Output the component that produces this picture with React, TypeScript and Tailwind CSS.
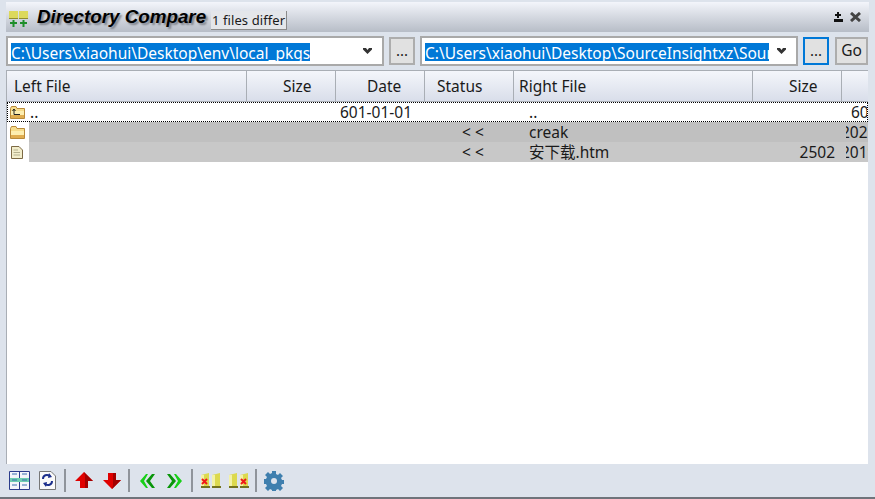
const font = { fontFamily: '"Noto Sans", "Noto Sans CJK SC", sans-serif' }

const cols = 'grid grid-cols-[240px_89px_89px_89px_239px_89px_minmax(0,1fr)]'

const HeaderCell = ({ label, pad }: { label: string; pad: string }) => (
  <div className={`flex h-full items-center border-r border-[#a9aeb5] pt-[1px] last:border-r-0 ${pad}`}>{label}</div>
)

const Combo = ({ text }: { text: string }) => (
  <div className="flex h-[30px] w-[378px] shrink-0 items-center border-2 border-[#a9a9a9] bg-white pl-[3px]">
    <div className="h-[20px] min-w-0 flex-1 overflow-hidden">
      <span className="inline-block whitespace-nowrap bg-[#0078d7] text-[15.5px] leading-[20px] text-white">{text}</span>
    </div>
    <div className="flex w-[27px] shrink-0 justify-center pr-[2px]">
      <svg width="9" height="6" viewBox="0 0 9 6">
        <path d="M0 0h3l1.500 2 1.500-2h3v1.500L4.500 6 0 1.500z" fill="#333" />
      </svg>
    </div>
  </div>
)

const DotsButton = ({ active }: { active?: boolean }) => (
  <div
    className={`flex h-[28px] w-[26px] shrink-0 items-end justify-center border-2 bg-[#e1e1e1] pb-[5px] text-[15px] leading-none ${active ? 'border-[#0078d7]' : 'border-[#adadad]'}`}
  >
    ...
  </div>
)

const FolderIcon = ({ up }: { up?: boolean }) => (
  <svg width="15" height="13" viewBox="0 0 15 13" className="shrink-0">
    <path d="M0.500 2.500 L1.500 0.500 H6 L7 2.500 H14.500 V12.500 H0.500 Z" fill="#f6dc8a" stroke="#b98a3a" />
    <path d="M1 5 H14 V9 H1 Z" fill="#fdeeb0" />
    <path d="M1 9 H14 V12 H1 Z" fill="#e0ad50" />
    {up && <path d="M4 3 V8.500 H10 M2.500 5 L4 3 L5.500 5" fill="none" stroke="#222" strokeWidth="1" />}
  </svg>
)

const FileIcon = () => (
  <svg width="12" height="13" viewBox="0 0 12 13" className="shrink-0">
    <path d="M0.500 0.500 H8 L11.500 4 V12.500 H0.500 Z" fill="#f2edcb" stroke="#7d6a45" />
    <path d="M2.500 4 H7 M2.500 6.500 H9 M2.500 9 H9" stroke="#b5b08e" />
  </svg>
)

const Arrow = ({ down }: { down?: boolean }) => (
  <svg width="18" height="17" viewBox="0 0 18 17" className={down ? '-scale-y-100' : ''}>
    <path d="M9 0 L18 9 H13 V16 H5 V9 H0 Z" fill="#e00000" />
    <path d="M9 0 L18 9 H13 V16 H10 V4 Z" fill="#a30000" />
  </svg>
)

const Chevrons = ({ right }: { right?: boolean }) => (
  <svg width="17" height="14" viewBox="0 0 17 14" className={right ? '-scale-x-100' : ''}>
    <path d="M7 0 L1 7 L7 14 H9 L5 7 L9 0 Z" fill="#18d018" />
    <path d="M13 0 L7 7 L13 14 H16 L11 7 L16 0 Z" fill="#0a960a" />
  </svg>
)

const FolderPair = ({ side }: { side: 'left' | 'right' }) => {
  const offset = side === 'left' ? 1 : 12
  return (
    <svg width="20" height="16" viewBox="0 0 20 16">
      <path d="M0 2 L8 0 V13 L0 13 Z M11 2 L19 0 V13 H11 Z" fill="#dcd94e" />
      <path d="M0 13 H9 V15 H0 Z M11 13 H20 V15 H11 Z" fill="#73721e" />
      <path d="M0 2 H3 V13 H0 Z M11 2 H14 V13 H11 Z" fill="#f3f2a6" />
      <path d={`M${offset} 6 L${offset + 5} 11 M${offset + 5} 6 L${offset} 11`} stroke="#f01818" strokeWidth="2" />
    </svg>
  )
}

const Gear = () => (
  <svg width="20" height="20" viewBox="0 0 20 20">
    <path
      d="M8 0h4v3l2 1 2-2 3 3-2 2 1 2h2v4h-2l-1 2 2 2-3 3-2-2-2 1v3H8v-3l-2-1-2 2-3-3 2-2-1-2H0V8h2l1-2-2-2 3-3 2 2 2-1z"
      fill="#3f7fae"
    />
    <circle cx="10" cy="10" r="3" fill="#dde3ec" />
  </svg>
)

const Sep = () => <div className="h-[23px] w-[2px] shrink-0 bg-[#8f949b]" />

const ClippedDate = ({ text, bg }: { text: string; bg: string }) => (
  <div className={`h-full pl-[4px] ${bg}`}>
    <div className="overflow-hidden whitespace-nowrap">
      <span className="-ml-[5px] inline-block">{text}</span>
    </div>
  </div>
)

const App = () => {
  return (
    <div className="h-[499px] w-[875px] overflow-hidden bg-[#dde3ec] pt-[2px] text-[#1a1a1a]" style={font}>
      <div className="mx-[6px] flex h-[30px] items-center bg-gradient-to-b from-[#f3f5fb] to-[#b7bdc7] pl-[3px] pr-[8px]">
        <svg width="20" height="17" viewBox="0 0 20 17" className="mt-[3px] shrink-0">
          <path d="M0 1 H9 V9 H0 Z M10 1 H19 V9 H10 Z" fill="#dcd95c" />
          <path d="M0 8 H9 V9 H0 Z M10 8 H19 V9 H10 Z" fill="#8f8d2e" />
          <path d="M4.500 10 V17 M1 13 H8 M14.500 10 V17 M11 13 H18" stroke="#1f8f2b" strokeWidth="2" />
        </svg>
        <div
          className="ml-[8px] whitespace-nowrap text-[18.800px] font-bold italic leading-none text-black [text-shadow:2px_2px_2px_#7d828b]"
          style={{ fontFamily: '"Liberation Sans", sans-serif' }}
        >
          Directory Compare
        </div>
        <div className="ml-[5px] mt-[7px] flex h-[19px] w-[76px] shrink-0 items-center justify-center border-b border-r border-[#8a8a8a] bg-[#e4e6ea] text-[13px] leading-none tracking-[0.1px]">
          1 files differ
        </div>
        <div className="ml-auto flex items-center gap-[6px]">
          <svg width="11" height="10" viewBox="0 0 11 10">
            <path d="M4 0h2v2h2v2H6v2H4V4H2V2h2z M1 7h9v3H1z" fill="#111" />
          </svg>
          <svg width="11" height="10" viewBox="0 0 11 10">
            <path d="M1 1 L10 9 M10 1 L1 9" stroke="#444" strokeWidth="3" />
          </svg>
        </div>
      </div>
      <div className="flex h-[38px] items-center bg-[#dde3ec] pl-[6px]">
        <Combo text="C:\Users\xiaohui\Desktop\env\local_pkgs" />
        <div className="ml-[5px]">
          <DotsButton />
        </div>
        <div className="ml-[5px]">
          <Combo text="C:\Users\xiaohui\Desktop\SourceInsightxz\SourceInsight" />
        </div>
        <div className="ml-[5px]">
          <DotsButton active />
        </div>
        <div className="ml-[6px] flex h-[28px] w-[33px] shrink-0 items-center justify-center border-2 border-[#adadad] bg-[#e1e1e1] text-[15.5px]">
          Go
        </div>
      </div>
      <div className="ml-[6px] mr-[7px] flex h-[394px] flex-col border-l border-[#a9aeb5] bg-white text-[15.5px]">
        <div className={`${cols} h-[32px] shrink-0 border-y border-[#a9aeb5] bg-gradient-to-b from-[#f4f6fb] to-[#d9deea]`}>
          <HeaderCell label="Left File" pad="pl-[7px]" />
          <HeaderCell label="Size" pad="pl-[36px]" />
          <HeaderCell label="Date" pad="pl-[31px]" />
          <HeaderCell label="Status" pad="pl-[12px]" />
          <HeaderCell label="Right File" pad="pl-[5px]" />
          <HeaderCell label="Size" pad="pl-[36px]" />
          <HeaderCell label="" pad="" />
        </div>
        <div className={`${cols} h-[20px] items-center border border-dotted border-black leading-[18px]`}>
          <div className="flex items-center pl-[2px]">
            <FolderIcon up />
            <span className="ml-[5px]">..</span>
          </div>
          <div />
          <div className="col-span-2 pl-[3px]">601-01-01</div>
          <div className="pl-[14px]">..</div>
          <div />
          <div className="overflow-hidden whitespace-nowrap pl-[8px]">601-01-01</div>
        </div>
        <div className={`${cols} h-[20px] items-center leading-[20px]`}>
          <div className="flex h-full items-center">
            <div className="flex h-full w-[22px] shrink-0 items-center pl-[3px]">
              <FolderIcon />
            </div>
            <div className="h-full flex-1 bg-[#c0c0c0]" />
          </div>
          <div className="h-full bg-[#c0c0c0]" />
          <div className="h-full bg-[#c0c0c0]" />
          <div className="h-full bg-[#c0c0c0] pl-[37px]">&lt; &lt;</div>
          <div className="h-full bg-[#c0c0c0] pl-[15px]">creak</div>
          <div className="h-full bg-[#c0c0c0]" />
          <ClippedDate text="2021-01-01" bg="bg-[#c0c0c0]" />
        </div>
        <div className={`${cols} h-[20px] items-center leading-[20px]`}>
          <div className="flex h-full items-center">
            <div className="flex h-full w-[22px] shrink-0 items-center pl-[4px]">
              <FileIcon />
            </div>
            <div className="h-full flex-1 bg-[#c8c8c8]" />
          </div>
          <div className="h-full bg-[#c8c8c8]" />
          <div className="h-full bg-[#c8c8c8]" />
          <div className="h-full bg-[#c8c8c8] pl-[37px]">&lt; &lt;</div>
          <div className="h-full bg-[#c8c8c8] pl-[15px]">安下载.htm</div>
          <div className="h-full bg-[#c8c8c8] pr-[7px] text-right">2502</div>
          <ClippedDate text="2019-01-01" bg="bg-[#c8c8c8]" />
        </div>
      </div>
      <div className="flex h-[35px] items-center border-b-2 border-[#6f747b] pl-[9px]">
        <svg width="21" height="19" viewBox="0 0 21 19" className="shrink-0">
          <path d="M0.500 0.500 H20.500 V18.500 H0.500 Z" fill="#f4f6fa" stroke="#2b3c8c" />
          <path d="M10.500 1 V18" stroke="#2b3c8c" />
          <path d="M1 7 H20 V11 H1 Z" fill="#6fcfb0" />
          <path d="M3 3 H8 M3 9 H8 M3 14 H8 M13 3 H18 M13 9 H18 M13 14 H18" stroke="#3a6fb0" />
        </svg>
        <svg width="17" height="19" viewBox="0 0 17 19" className="ml-[9px] shrink-0">
          <path d="M0.500 0.500 H12 L16.500 5 V18.500 H0.500 Z" fill="#fafafa" stroke="#777" />
          <path d="M4 8 C4 4 8 3 11 5 M13 10 C13 14 9 15 6 13" fill="none" stroke="#1c2f8c" strokeWidth="2" />
          <path d="M10 2 L13 6 L9 7 Z M7 16 L4 12 L8 11 Z" fill="#1c2f8c" />
        </svg>
        <div className="ml-[8px]">
          <Sep />
        </div>
        <div className="ml-[9px] flex items-center gap-[10px]">
          <Arrow />
          <Arrow down />
        </div>
        <div className="ml-[7px]">
          <Sep />
        </div>
        <div className="ml-[9px] flex items-center gap-[10px]">
          <Chevrons />
          <Chevrons right />
        </div>
        <div className="ml-[8px]">
          <Sep />
        </div>
        <div className="ml-[8px] flex items-center gap-[8px]">
          <FolderPair side="left" />
          <FolderPair side="right" />
        </div>
        <div className="ml-[6px]">
          <Sep />
        </div>
        <div className="ml-[7px]">
          <Gear />
        </div>
      </div>
    </div>
  )
}

export default App
